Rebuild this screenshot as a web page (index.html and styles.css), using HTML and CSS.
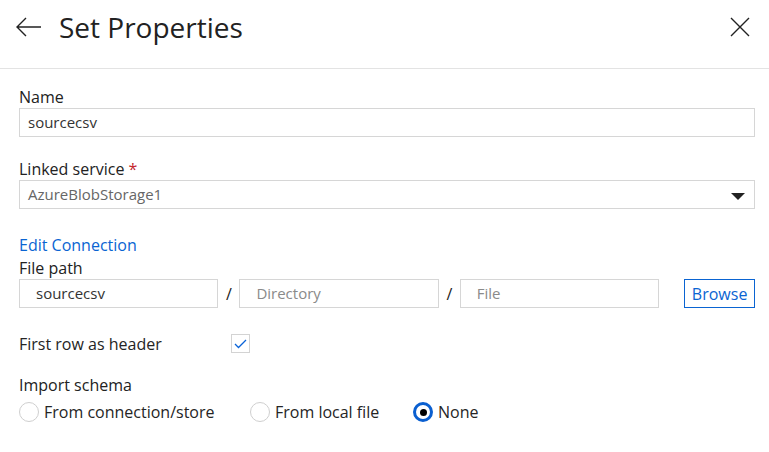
FILE: index.html
```html
<!DOCTYPE html>
<html lang="en">
<head>
<meta charset="utf-8">
<title>Set Properties</title>
<link rel="stylesheet" href="styles.css">
</head>
<body>
<div class="panel">
  <header class="header">
    <button class="icon-btn back" aria-label="Back">
      <svg width="26" height="20" viewBox="0 0 26 20"><path d="M1 10 H25 M10 1 L1 10 L10 19" fill="none" stroke="#222" stroke-width="1.4"/></svg>
    </button>
    <h1 class="title">Set Properties</h1>
    <button class="icon-btn close" aria-label="Close">
      <svg width="20" height="20" viewBox="0 0 20 20"><path d="M1 1 L19 19 M19 1 L1 19" fill="none" stroke="#222" stroke-width="1.4"/></svg>
    </button>
  </header>
  <main class="content">
    <div class="field">
      <div class="label">Name</div>
      <div class="input">sourcecsv</div>
    </div>
    <div class="field">
      <div class="label">Linked service <span class="req">*</span></div>
      <div class="input select"><span class="muted">AzureBlobStorage1</span><span class="caret"></span></div>
    </div>
    <a class="link">Edit Connection</a>
    <div class="label">File path</div>
    <div class="path-row">
      <div class="input path">sourcecsv</div>
      <span class="slash">/</span>
      <div class="input path placeholder">Directory</div>
      <span class="slash">/</span>
      <div class="input path placeholder">File</div>
      <button class="browse">Browse</button>
    </div>
    <div class="check-row">
      <span class="check-label">First row as header</span>
      <span class="checkbox">
        <svg width="13" height="10" viewBox="0 0 13 10"><path d="M1 5 L4.5 8.5 L12 1" fill="none" stroke="#0a63d8" stroke-width="1.3"/></svg>
      </span>
    </div>
    <div class="label schema">Import schema</div>
    <div class="radio-row">
      <label class="radio r1"><span class="circle"></span>From connection/store</label>
      <label class="radio r2"><span class="circle"></span>From local file</label>
      <label class="radio r3"><span class="circle on"></span>None</label>
    </div>
  </main>
</div>
</body>
</html>
```

FILE: styles.css
```css
* { box-sizing: border-box; }
html, body { margin: 0; background: #fff; }
body {
  font-family: "Open Sans", "Noto Sans", sans-serif;
  color: #252525;
}
.panel { width: 769px; }
.header {
  height: 69px;
  border-bottom: 1px solid #e3e3e3;
  display: flex;
  align-items: center;
  padding: 0 19px 14px 16px;
}
.icon-btn {
  border: 0;
  background: none;
  padding: 0;
  display: flex;
  cursor: pointer;
}
.title {
  font-size: 28px;
  font-weight: 400;
  margin: 0 0 0 17px;
  flex: 1;
  line-height: 36px;
  color: #222;
}
.content {
  padding: 18px 14px 0 19px;
}
.field { margin-bottom: 22px; }
.label {
  font-size: 16px;
  line-height: 20px;
  margin-bottom: 1px;
  color: #222;
}
.req { color: #c4262e; }
.input {
  height: 29px;
  border: 1px solid #d6d6d6;
  font-size: 15px;
  line-height: 27px;
  padding: 0 8px;
  color: #333;
}
.select {
  display: flex;
  justify-content: space-between;
  align-items: center;
}
.muted { color: #666; }
.caret {
  width: 0; height: 0;
  border-left: 7px solid transparent;
  border-right: 7px solid transparent;
  border-top: 7px solid #222;
  margin-top: 4px;
  margin-right: 1px;
}
.link {
  display: block;
  color: #0a64d2;
  font-size: 16px;
  line-height: 23px;
  margin-top: 25px;
  margin-bottom: 1px;
}
.path-row {
  display: flex;
  align-items: center;
  margin-top: 1px;
}
.path {
  width: 200px;
  padding-left: 16px;
}
.placeholder { color: #8a8a8a; }
.slash {
  width: 21px;
  text-align: center;
  font-size: 16px;
  color: #222;
}
.browse {
  margin-left: 25px;
  height: 29px;
  width: 71px;
  border: 1px solid #0a64d2;
  background: #fff;
  color: #0a64d2;
  font-family: inherit;
  font-size: 16px;
  padding: 0;
}
.check-row {
  display: flex;
  align-items: center;
  margin-top: 26px;
  height: 19px;
}
.check-label {
  font-size: 16px;
  width: 212px;
}
.checkbox {
  width: 19px; height: 19px;
  border: 1px solid #d3d3d3;
  display: flex;
  align-items: center;
  justify-content: center;
}
.schema { margin-top: 22px; margin-bottom: 6px; }
.radio-row {
  display: flex;
  align-items: center;
  font-size: 16px;
}
.radio {
  display: flex;
  align-items: center;
  gap: 5px;
}
.r1 { width: 231px; }
.r2 { width: 163px; }
.circle {
  width: 20px; height: 20px;
  border-radius: 50%;
  border: 1px solid #cfcfcf;
  display: inline-block;
}
.circle.on {
  border: 3px solid #0a5fd0;
  position: relative;
}
.circle.on::after {
  content: "";
  position: absolute;
  left: 3.5px; top: 3.5px;
  width: 7px; height: 7px;
  border-radius: 50%;
  background: #000;
}
```
